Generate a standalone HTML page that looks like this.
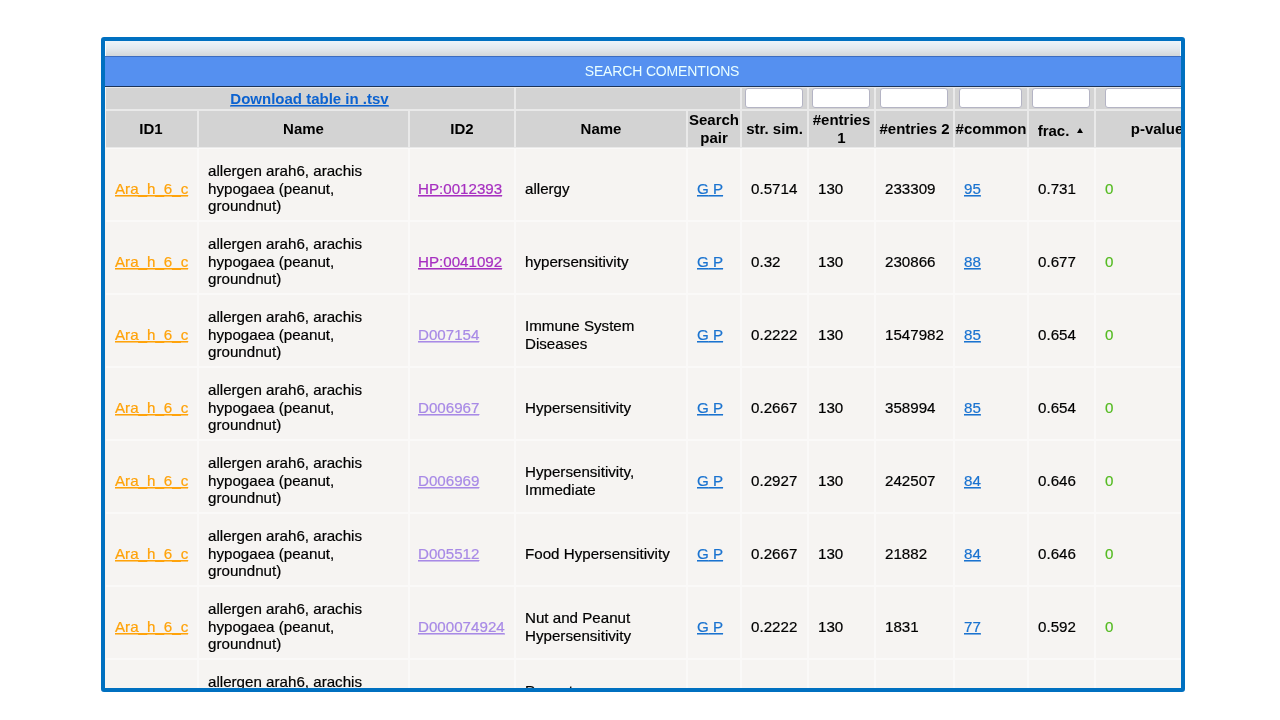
<!DOCTYPE html>
<html lang="en">
<head>
<meta charset="utf-8">
<title>Search comentions</title>
<style>
html,body{margin:0;padding:0;background:#fff;}
body{width:1280px;height:720px;overflow:hidden;position:relative;font-family:"Liberation Sans",Arial,Helvetica,sans-serif;}
#box{will-change:transform;position:absolute;left:101px;top:37px;width:1076px;height:647px;border:4px solid #0070c0;border-radius:3px;overflow:hidden;background:#f6f4f2;}
#box::after{content:"";position:absolute;left:0;top:46px;bottom:0;width:1px;background:#f8f4f0;}
#grad{box-shadow:inset 1px 0 #f6fafc,inset -1px 0 #f6fafc;position:absolute;left:0;top:0;width:100%;height:15px;background:linear-gradient(#ecf4fa,#e3e9ee 50%,#d3d7d9);}
#cap{position:absolute;left:0;top:15px;width:1114px;height:29px;background:#5590f0;border-top:1px solid #3c6cc0;border-bottom:1px solid #1c3458;color:#eaffff;font-size:14px;letter-spacing:-0.15px;line-height:29px;text-align:center;}
table{position:absolute;left:-1px;top:46px;width:1115px;border-collapse:separate;border-spacing:0;table-layout:fixed;font-size:15.15px;line-height:17.5px;color:#000;}
th{background:#d3d3d3;border:1px solid #e9e9e9;padding:0;font-weight:bold;font-size:15px;line-height:18px;text-align:center;vertical-align:middle;box-sizing:border-box;overflow:hidden;white-space:nowrap;}
tr.h1 th{height:23px;}
tr.h2 th{height:38px;}
td{-webkit-text-stroke:0.2px;background:#f6f4f2;border:1px solid #faf9f8;padding:8px 0 0 9px;height:73px;box-sizing:border-box;vertical-align:middle;text-align:left;overflow:hidden;white-space:nowrap;}
a{text-decoration:underline;text-decoration-thickness:1px;position:relative;}
a::after{content:"";position:absolute;left:0;right:0;bottom:0;height:1px;background:currentColor;opacity:.55;}
a.o{color:#ffa30a;}
a.hp{color:#a62fc0;}
a.d{color:#a88ae6;}
a.b{color:#1a73d0;}
a.dl{color:#0b62d0;}
.g{color:#55bb22;}
input{display:block;position:relative;box-sizing:border-box;height:20px;margin:0 auto;border:1px solid #b4b4c4;border-radius:3px;background:#fff;padding:0;outline:none;}
th.i{vertical-align:top;}
.fr{position:relative;top:2px;left:-2px;}
.arr{display:inline-block;width:0;height:0;border-left:3.5px solid transparent;border-right:3.5px solid transparent;border-bottom:5px solid #000;margin-left:6px;position:relative;top:-1px;}
td.c1{padding-left:10px;}
td.c3{padding-left:8px;}
</style>
</head>
<body>
<div id="box">
<div id="grad"></div>
<div id="cap">SEARCH COMENTIONS</div>
<table>
<colgroup>
<col style="width:94px"><col style="width:211px"><col style="width:106px"><col style="width:172px"><col style="width:54px"><col style="width:67px"><col style="width:67px"><col style="width:79px"><col style="width:74px"><col style="width:67px"><col style="width:124px">
</colgroup>
<thead>
<tr class="h1">
<th colspan="3"><a class="dl" href="#">Download table in .tsv</a></th>
<th colspan="2"></th>
<th class="i"><input type="text" style="width:58px;left:-1px"></th>
<th class="i"><input type="text" style="width:58px;left:-1px"></th>
<th class="i"><input type="text" style="width:68px;left:-1px"></th>
<th class="i"><input type="text" style="width:63px;left:-1px"></th>
<th class="i"><input type="text" style="width:58px;left:-1px"></th>
<th class="i"><input type="text" style="width:104px"></th>
</tr>
<tr class="h2">
<th>ID1</th><th>Name</th><th>ID2</th><th>Name</th><th>Search<br>pair</th><th>str. sim.</th><th>#entries<br>1</th><th>#entries 2</th><th>#common</th><th><span class="fr">frac.</span><span class="arr"></span></th><th>p-value</th>
</tr>
</thead>
<tbody>
<tr>
<td class="c1"><a class="o" href="#">Ara_h_6_c</a></td>
<td class="c2">allergen arah6, arachis<br>hypogaea (peanut,<br>groundnut)</td>
<td class="c3"><a class="hp" href="#">HP:0012393</a></td>
<td class="c4">allergy</td>
<td class="c5"><a class="b" href="#">G</a><a class="b" href="#"> P</a></td>
<td class="c6">0.5714</td>
<td class="c7">130</td>
<td class="c8">233309</td>
<td class="c9"><a class="b" href="#">95</a></td>
<td class="c10">0.731</td>
<td class="c11"><span class="g">0</span></td>
</tr>
<tr>
<td class="c1"><a class="o" href="#">Ara_h_6_c</a></td>
<td class="c2">allergen arah6, arachis<br>hypogaea (peanut,<br>groundnut)</td>
<td class="c3"><a class="hp" href="#">HP:0041092</a></td>
<td class="c4">hypersensitivity</td>
<td class="c5"><a class="b" href="#">G</a><a class="b" href="#"> P</a></td>
<td class="c6">0.32</td>
<td class="c7">130</td>
<td class="c8">230866</td>
<td class="c9"><a class="b" href="#">88</a></td>
<td class="c10">0.677</td>
<td class="c11"><span class="g">0</span></td>
</tr>
<tr>
<td class="c1"><a class="o" href="#">Ara_h_6_c</a></td>
<td class="c2">allergen arah6, arachis<br>hypogaea (peanut,<br>groundnut)</td>
<td class="c3"><a class="d" href="#">D007154</a></td>
<td class="c4">Immune System<br>Diseases</td>
<td class="c5"><a class="b" href="#">G</a><a class="b" href="#"> P</a></td>
<td class="c6">0.2222</td>
<td class="c7">130</td>
<td class="c8">1547982</td>
<td class="c9"><a class="b" href="#">85</a></td>
<td class="c10">0.654</td>
<td class="c11"><span class="g">0</span></td>
</tr>
<tr>
<td class="c1"><a class="o" href="#">Ara_h_6_c</a></td>
<td class="c2">allergen arah6, arachis<br>hypogaea (peanut,<br>groundnut)</td>
<td class="c3"><a class="d" href="#">D006967</a></td>
<td class="c4">Hypersensitivity</td>
<td class="c5"><a class="b" href="#">G</a><a class="b" href="#"> P</a></td>
<td class="c6">0.2667</td>
<td class="c7">130</td>
<td class="c8">358994</td>
<td class="c9"><a class="b" href="#">85</a></td>
<td class="c10">0.654</td>
<td class="c11"><span class="g">0</span></td>
</tr>
<tr>
<td class="c1"><a class="o" href="#">Ara_h_6_c</a></td>
<td class="c2">allergen arah6, arachis<br>hypogaea (peanut,<br>groundnut)</td>
<td class="c3"><a class="d" href="#">D006969</a></td>
<td class="c4">Hypersensitivity,<br>Immediate</td>
<td class="c5"><a class="b" href="#">G</a><a class="b" href="#"> P</a></td>
<td class="c6">0.2927</td>
<td class="c7">130</td>
<td class="c8">242507</td>
<td class="c9"><a class="b" href="#">84</a></td>
<td class="c10">0.646</td>
<td class="c11"><span class="g">0</span></td>
</tr>
<tr>
<td class="c1"><a class="o" href="#">Ara_h_6_c</a></td>
<td class="c2">allergen arah6, arachis<br>hypogaea (peanut,<br>groundnut)</td>
<td class="c3"><a class="d" href="#">D005512</a></td>
<td class="c4">Food Hypersensitivity</td>
<td class="c5"><a class="b" href="#">G</a><a class="b" href="#"> P</a></td>
<td class="c6">0.2667</td>
<td class="c7">130</td>
<td class="c8">21882</td>
<td class="c9"><a class="b" href="#">84</a></td>
<td class="c10">0.646</td>
<td class="c11"><span class="g">0</span></td>
</tr>
<tr>
<td class="c1"><a class="o" href="#">Ara_h_6_c</a></td>
<td class="c2">allergen arah6, arachis<br>hypogaea (peanut,<br>groundnut)</td>
<td class="c3"><a class="d" href="#">D000074924</a></td>
<td class="c4">Nut and Peanut<br>Hypersensitivity</td>
<td class="c5"><a class="b" href="#">G</a><a class="b" href="#"> P</a></td>
<td class="c6">0.2222</td>
<td class="c7">130</td>
<td class="c8">1831</td>
<td class="c9"><a class="b" href="#">77</a></td>
<td class="c10">0.592</td>
<td class="c11"><span class="g">0</span></td>
</tr>
<tr>
<td class="c1"><a class="o" href="#">Ara_h_6_c</a></td>
<td class="c2">allergen arah6, arachis<br>hypogaea (peanut,<br>groundnut)</td>
<td class="c3"><a class="d" href="#">D021183</a></td>
<td class="c4">Peanut<br>Hypersensitivity</td>
<td class="c5"><a class="b" href="#">G</a><a class="b" href="#"> P</a></td>
<td class="c6">0.2222</td>
<td class="c7">130</td>
<td class="c8">1534</td>
<td class="c9"><a class="b" href="#">76</a></td>
<td class="c10">0.585</td>
<td class="c11"><span class="g">0</span></td>
</tr>
</tbody>
</table>
</div>
</body>
</html>
